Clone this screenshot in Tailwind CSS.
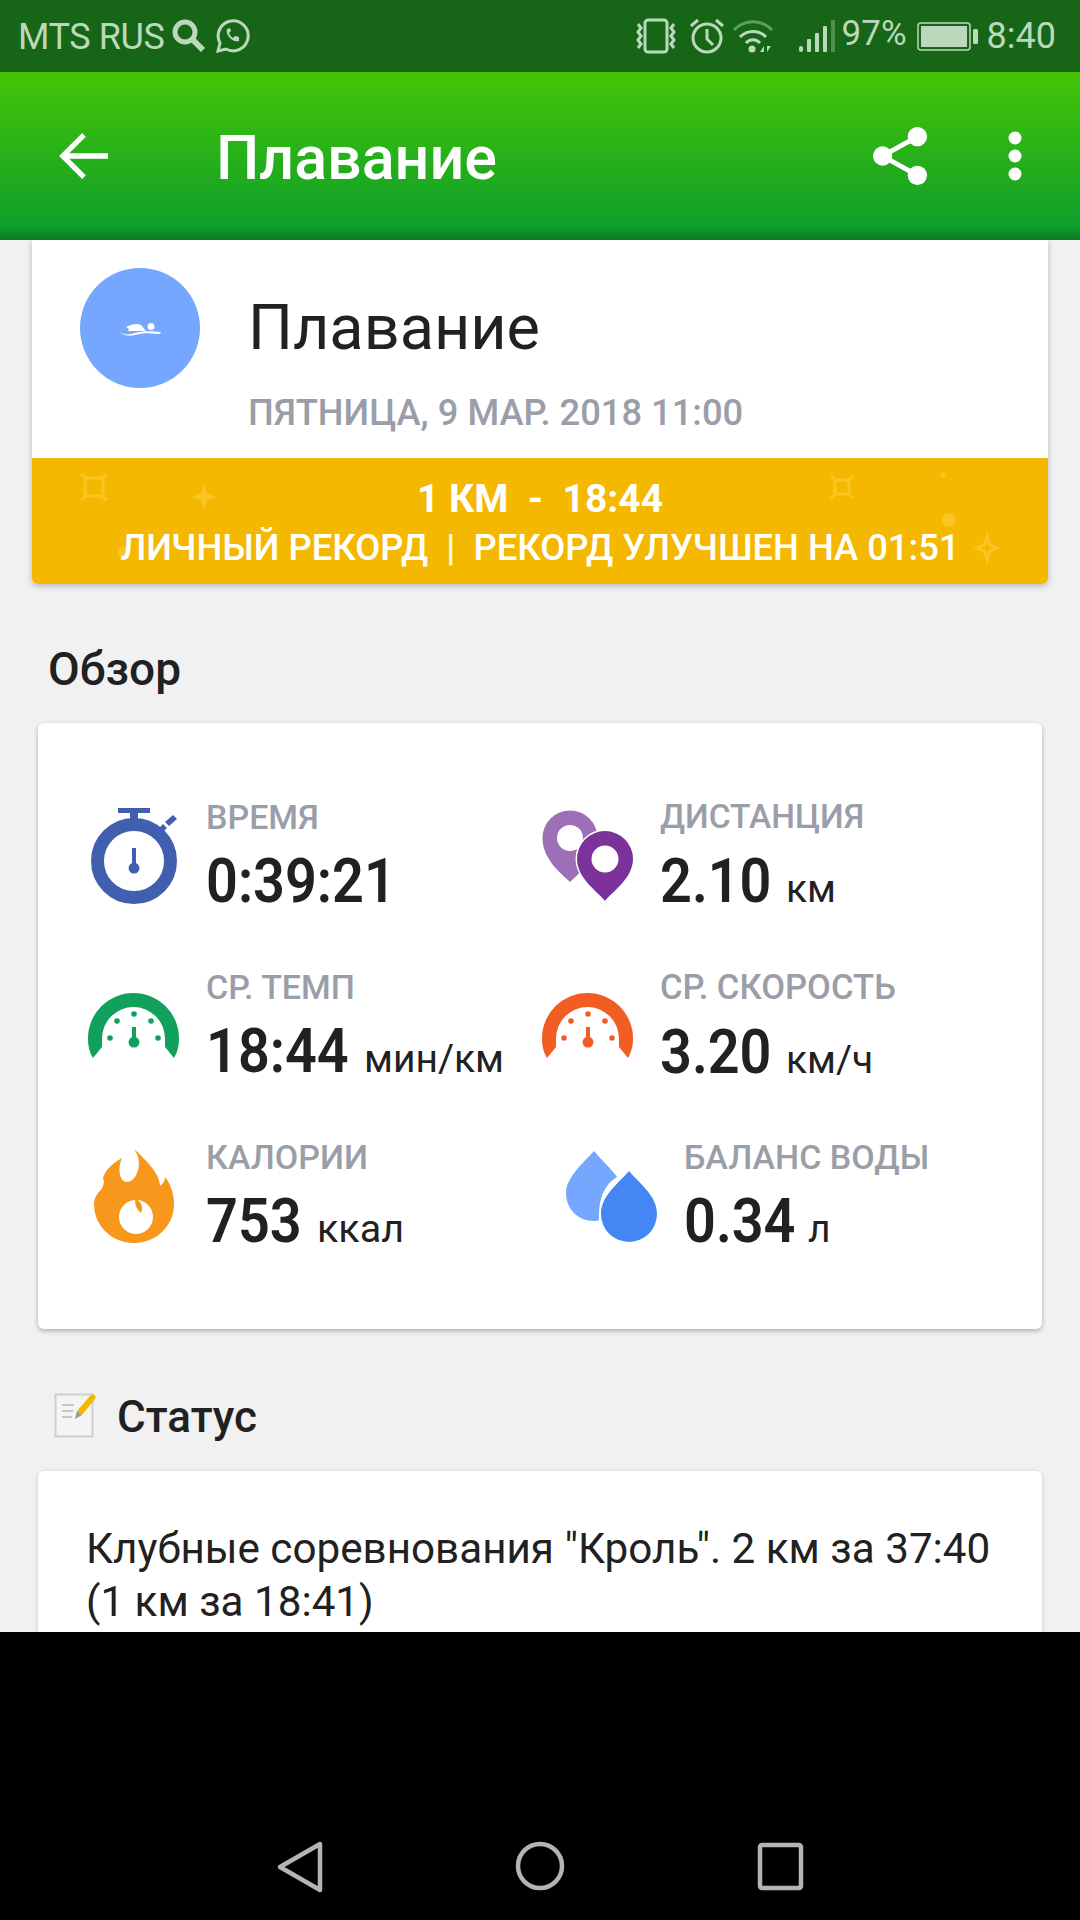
<!DOCTYPE html>
<html><head><meta charset="utf-8"><script src="https://cdn.jsdelivr.net/npm/@tailwindcss/browser@4"></script></head>
<body class="m-0">
<div class="w-[1080px] h-[1920px] flex flex-col overflow-hidden bg-[#f1f1f1] font-['Roboto',sans-serif] text-[#212121]">
  <!-- status bar -->
  <div class="h-[72px] shrink-0 bg-[#176617] flex items-center text-[#bcd8bc] relative">
    <span class="ml-[18px] w-[150px] text-[36px] tracking-[-0.4px] whitespace-nowrap translate-y-[1px]">MTS RUS</span>
    <svg class="ml-[3px]" width="36" height="36" viewBox="0 0 36 36" fill="none" stroke="#bcd8bc"><circle cx="14" cy="14" r="10" stroke-width="5"/><path d="M21 21l11 11" stroke-width="6"/></svg>
    <svg class="ml-[8px]" width="36" height="36" viewBox="0 0 36 36" fill="none" stroke="#bcd8bc" stroke-width="3"><path d="M3 33l2-8a15 15 0 1 1 6 6z"/><path d="M12 11c-2 6 6 14 12 12l0-4-4-1-2 2c-2-1-3-3-4-5l2-2-1-3z" fill="#bcd8bc" stroke="none"/></svg>
    <div class="ml-auto flex items-center h-full">
      <svg width="44" height="36" viewBox="0 0 44 36" fill="none" stroke="#bcd8bc" stroke-width="3"><rect x="11" y="2" width="22" height="32" rx="3"/><path d="M4 6l3 4-3 4 3 4-3 4 3 4-3 4M40 6l-3 4 3 4-3 4 3 4-3 4 3 4"/></svg>
      <svg class="ml-[10px]" width="38" height="38" viewBox="0 0 38 38" fill="none" stroke="#bcd8bc" stroke-width="3"><circle cx="19" cy="21" r="14"/><path d="M19 12v10l6 6M3 9l7-6M35 9l-7-6"/></svg>
      <svg class="ml-[7px]" width="42" height="36" viewBox="0 0 42 36" fill="none"><path d="M1 12a26 26 0 0 1 38 0" stroke="#5f9c5f" stroke-width="3"/><path d="M7 19a18 18 0 0 1 26 0M13 25a9 9 0 0 1 14 0" stroke="#bcd8bc" stroke-width="3"/><circle cx="19" cy="31" r="3.500" fill="#bcd8bc"/><path d="M27 34l4-6v6zM34 28v6l4-6z" fill="#bcd8bc"/></svg>
      <svg class="ml-[23px]" width="38" height="36" viewBox="0 0 38 36"><g fill="#bcd8bc"><rect x="1" y="28" width="4" height="6" rx="2"/><rect x="9" y="21" width="4" height="13" rx="1"/><rect x="17" y="15" width="4" height="19" rx="1"/><rect x="25" y="8" width="4" height="26" rx="1"/></g><rect x="33" y="2" width="4" height="32" fill="#4f8f4f"/></svg>
      <span class="ml-[6px] text-[35px] w-[68px] whitespace-nowrap -translate-y-[2px]">97%</span>
      <svg class="ml-[7px]" width="62" height="32" viewBox="0 0 62 32"><rect x="1" y="3" width="52" height="27" rx="3" fill="none" stroke="#bcd8bc" stroke-width="1.500"/><rect x="4" y="6" width="46" height="21" fill="#bcd8bc"/><rect x="56" y="9" width="5" height="15" rx="1.500" fill="#bcd8bc"/></svg>
      <span class="ml-[8px] mr-[24px] text-[36px] whitespace-nowrap">8:40</span>
    </div>
  </div>
  <!-- app bar -->
  <div class="h-[168px] shrink-0 flex items-center text-white bg-[linear-gradient(180deg,#44c505_0%,#0f9f2b_92%,#0a7a22_100%)]">
    <svg class="ml-[59px]" width="50" height="50" viewBox="0 0 52 52" fill="none" stroke="#fff" stroke-width="5.500"><path d="M51 26H5M26 4L4 26l22 22"/></svg>
    <span class="ml-[107px] text-[61px] font-medium leading-none translate-y-[2px]">Плавание</span>
    <svg class="ml-auto" width="56" height="62" viewBox="0 0 58 62" fill="#fff"><circle cx="47" cy="11" r="10"/><circle cx="11" cy="31" r="10"/><circle cx="47" cy="51" r="10"/><path d="M47 11L11 31l36 20" fill="none" stroke="#fff" stroke-width="5"/></svg>
    <svg class="ml-[80px] mr-[58px]" width="14" height="50" viewBox="0 0 14 50" fill="#fff"><circle cx="7" cy="7" r="6.500"/><circle cx="7" cy="25" r="6.500"/><circle cx="7" cy="43" r="6.500"/></svg>
  </div>
  <!-- content -->
  <div class="flex-1 overflow-hidden">
    <div class="mx-[32px] bg-white rounded-b-[6px] shadow-[0_2px_6px_rgba(0,0,0,0.25)] overflow-hidden">
      <div class="h-[218px] flex pl-[48px] pt-[28px]">
        <div class="w-[120px] h-[120px] rounded-full bg-[#74a7fd] flex items-center justify-center">
          <svg class="translate-y-[2px]" width="44" height="16" viewBox="0 0 44 16" fill="#fff"><circle cx="33" cy="4.500" r="3.500"/><path d="M8 5c6-3 11-4 15-2l5 6H10l1-2z"/><path d="M1 10c6 3 10 3 16 1 7-2 14-2 26-1-1 2-1 2-4 2-8-1-14-1-22 1-7 2-11 0-16-3z"/></svg>
        </div>
        <div class="ml-[48px]">
          <div class="text-[63px] leading-none mt-[28px]">Плавание</div>
          <div class="text-[36.3px] leading-none mt-[36px] font-medium text-[#9a9ea8] whitespace-nowrap">ПЯТНИЦА, 9 МАР. 2018 11:00</div>
        </div>
      </div>
      <div class="h-[126px] bg-[#f5b800] relative flex flex-col items-center text-white font-bold">
        <svg class="absolute left-0 top-0" width="1016" height="126" viewBox="0 0 1016 126" fill="none" stroke="#f8c524" stroke-width="3"><rect x="53" y="20" width="18" height="18"/><path d="M49 16l7 5M75 16l-7 5M49 42l7-5M75 42l-7-5M803 22h14v14h-14zM799 18l5 5M821 18l-5 5M799 40l5-5M821 40l-5-5"/><path d="M172 25l-3 11-10 3 10 3 3 11 3-11 10-3-10-3z" fill="#f8c524" stroke="none"/><circle cx="911" cy="17" r="3" fill="#f8c524" stroke="none"/><circle cx="917" cy="62" r="7" fill="#f8c524" stroke="none"/><circle cx="92" cy="94" r="6" fill="#f8c524" stroke="none"/><path d="M955 78l-3 9-7 3 7 3 3 9 3-9 7-3-7-3z"/></svg>
        <div class="relative text-[39px] leading-none mt-[22px] whitespace-pre">1 КМ  -  18:44</div>
        <div class="relative text-[36.4px] leading-none mt-[11px] whitespace-pre font-medium">ЛИЧНЫЙ РЕКОРД  |  РЕКОРД УЛУЧШЕН НА 01:51</div>
      </div>
    </div>
    <div class="h-[139px] pl-[48px] pt-[62px] text-[46px] leading-none font-medium">Обзор</div>
    <div class="mx-[38px] h-[606px] bg-white rounded-[6px] shadow-[0_2px_5px_rgba(0,0,0,0.28)] grid grid-cols-[454px_1fr] grid-rows-[170px_170px_170px] pl-[47px] pt-[65px]">
      <!-- time -->
      <div class="flex">
        <svg class="w-[96px] h-[120px] shrink-0" viewBox="0 0 96 120"><g fill="#405fae"><rect x="33" y="20" width="32" height="5"/><rect x="45" y="24" width="8" height="12"/><path d="M80 34l8-7 4 4-8 7zM72 42l6-6 4 4-6 6z"/><circle cx="49" cy="73" r="36.500" fill="none" stroke="#405fae" stroke-width="13"/><path d="M47 60h4v15a5.500 5.500 0 1 1-4 0z"/></g></svg>
        <div class="ml-[25px] pt-[12px]"><div class="text-[34px] leading-none font-medium text-[#9a9ea8]">ВРЕМЯ</div><div class="flex items-baseline leading-none mt-[16px] whitespace-nowrap"><span class="inline-block w-[185px] origin-left scale-x-[.9] text-[62px] font-semibold">0:39:21</span></div></div>
      </div>
      <!-- distance -->
      <div class="flex">
        <svg class="w-[96px] h-[120px] shrink-0" viewBox="0 0 96 120"><path d="M31 94C24 87 3.500 72 3.500 50a27.500 27.500 0 0 1 55 0C58.500 72 38 87 31 94z" fill="#9d6fb6"/><circle cx="31" cy="50" r="13" fill="#fff"/><path d="M66 113C58 103 38 90 38 71a28 28 0 0 1 56 0C94 90 74 103 66 113z" fill="#7b329b" stroke="#fff" stroke-width="3" paint-order="stroke"/><circle cx="66" cy="71" r="13.500" fill="#fff"/></svg>
        <div class="ml-[25px] pt-[12px]"><div class="text-[33.5px] leading-none font-medium text-[#9a9ea8] whitespace-nowrap">ДИСТАНЦИЯ</div><div class="flex items-baseline leading-none mt-[16px] whitespace-nowrap"><span class="inline-block w-[108px] origin-left scale-x-[.9] text-[62px] font-semibold">2.10</span><span class="text-[39px] ml-[18px]">км</span></div></div>
      </div>
      <!-- pace -->
      <div class="flex">
        <svg class="w-[96px] h-[120px] shrink-0" viewBox="0 0 96 120"><path d="M8 100C4 93 3 87 3 80.500A45.500 45.500 0 0 1 94 80.500C94 87 93 93 89 100L80 89C80 86 80 83 80 80.500A31.500 31.500 0 0 0 17 80.500C17 83 17 86 17 89Z" fill="#11a15d"/><g fill="#11a15d"><circle cx="49" cy="56" r="2.800"/><circle cx="32" cy="63" r="2.800"/><circle cx="66" cy="63" r="2.800"/><circle cx="25" cy="80" r="2.800"/><circle cx="73" cy="80" r="2.800"/><path d="M47 69h4v10a5.500 5.500 0 1 1-4 0z"/></g></svg>
        <div class="ml-[25px] pt-[12px]"><div class="text-[34px] leading-none font-medium text-[#9a9ea8] whitespace-nowrap">СР. ТЕМП</div><div class="flex items-baseline leading-none mt-[16px] whitespace-nowrap"><span class="inline-block w-[140px] origin-left scale-x-[.9] text-[62px] font-semibold">18:44</span><span class="text-[39px] ml-[18px]">мин/км</span></div></div>
      </div>
      <!-- speed -->
      <div class="flex">
        <svg class="w-[96px] h-[120px] shrink-0" viewBox="0 0 96 120"><path d="M8 100C4 93 3 87 3 80.500A45.500 45.500 0 0 1 94 80.500C94 87 93 93 89 100L80 89C80 86 80 83 80 80.500A31.500 31.500 0 0 0 17 80.500C17 83 17 86 17 89Z" fill="#f15d22"/><g fill="#f15d22"><circle cx="49" cy="56" r="2.800"/><circle cx="32" cy="63" r="2.800"/><circle cx="66" cy="63" r="2.800"/><circle cx="25" cy="80" r="2.800"/><circle cx="73" cy="80" r="2.800"/><path d="M47 69h4v10a5.500 5.500 0 1 1-4 0z"/></g></svg>
        <div class="ml-[25px] pt-[12px]"><div class="text-[34.6px] leading-none font-medium text-[#9a9ea8] whitespace-nowrap">СР. СКОРОСТЬ</div><div class="flex items-baseline leading-none mt-[16px] whitespace-nowrap"><span class="inline-block w-[108px] origin-left scale-x-[.9] text-[62px] font-semibold">3.20</span><span class="text-[39px] ml-[18px]">км/ч</span></div></div>
      </div>
      <!-- calories -->
      <div class="flex">
        <svg class="w-[96px] h-[120px] shrink-0" viewBox="0 0 96 120"><path d="M49 21C54 28 55 36 53 42C51 50 46 54 42 54C35 54 32 42 37 30C28 35 20 42 18 50C20 55 18 58 16 62C11 66 9 72 9 76C9 98 27 115 49 115C71 115 89 98 89 76C89 65 85 55 80 49C80 53 78 56 75 58C75 46 62 33 49 21z" fill="#f7981d"/><circle cx="51" cy="89" r="17" fill="#fff"/><path d="M50 71C50 78 52 82 56 85C58 80 57 76 54 73z" fill="#f7981d"/></svg>
        <div class="ml-[25px] pt-[12px]"><div class="text-[34px] leading-none font-medium text-[#9a9ea8] whitespace-nowrap">КАЛОРИИ</div><div class="flex items-baseline leading-none mt-[16px] whitespace-nowrap"><span class="inline-block w-[94px] origin-left scale-x-[.9] text-[62px] font-semibold">753</span><span class="text-[39.5px] ml-[17px]">ккал</span></div></div>
      </div>
      <!-- water -->
      <div class="flex">
        <svg class="w-[120px] h-[120px] shrink-0" viewBox="0 0 120 120"><path d="M55 23C62 32 72 40 78 49C66 56 59 70 60 92C58 93 57 93 55 93C39 93 27 81 27 65C27 50 43 36 55 23z" fill="#74a7fd"/><path d="M90 43C102 57 118 68 118 86A28 28 0 0 1 62 86C62 68 78 57 90 43z" fill="#4487f4"/></svg>
        <div class="ml-[25px] pt-[12px]"><div class="text-[34px] leading-none font-medium text-[#9a9ea8] whitespace-nowrap">БАЛАНС ВОДЫ</div><div class="flex items-baseline leading-none mt-[16px] whitespace-nowrap"><span class="inline-block w-[108px] origin-left scale-x-[.9] text-[62px] font-semibold">0.34</span><span class="text-[39px] ml-[16px]">л</span></div></div>
      </div>
    </div>
    <div class="h-[142px] pl-[54px] pt-[63px] flex items-start">
      <svg class="shrink-0" width="44" height="46" viewBox="0 0 44 46"><rect x="1.500" y="2.500" width="37" height="42" fill="#f4f4f4" stroke="#cfcfcf" stroke-width="2"/><path d="M8 13h12M8 19h11M8 25h10" stroke="#c6c6c6" stroke-width="2"/><path d="M23 19l13-15c3-3 7 0 5 3L28 23z" fill="#f5b800"/><path d="M23 19l5 4-7 4z" fill="#9a9a9a"/></svg>
      <span class="ml-[19px] text-[44px] leading-none font-medium mt-[3px]">Статус</span>
    </div>
    <div class="mx-[38px] h-[300px] bg-white rounded-[6px] shadow-[0_1px_4px_rgba(0,0,0,0.2)] pl-[48px] pt-[51px] text-[42.2px] leading-[53px]">
      <div class="whitespace-nowrap">Клубные соревнования "Кроль". 2 км за 37:40</div>
      <div class="whitespace-nowrap">(1 км за 18:41)</div>
    </div>
  </div>
  <!-- nav -->
  <div class="h-[288px] shrink-0 bg-black relative">
    <svg class="absolute left-[276px] top-[208px]" width="50" height="54" viewBox="0 0 50 54" fill="none" stroke="#b4b4b4" stroke-width="4.500" stroke-linejoin="round"><path d="M44 4v46L4 27z"/></svg>
    <svg class="absolute left-[514px] top-[206px]" width="52" height="56" viewBox="0 0 52 56" fill="none" stroke="#b4b4b4" stroke-width="4.500"><circle cx="26" cy="28" r="22"/></svg>
    <svg class="absolute left-[757px] top-[210px]" width="48" height="50" viewBox="0 0 48 50" fill="none" stroke="#b4b4b4" stroke-width="4.500"><rect x="3" y="3" width="41" height="43" rx="2"/></svg>
  </div>
</div>
</body></html>
